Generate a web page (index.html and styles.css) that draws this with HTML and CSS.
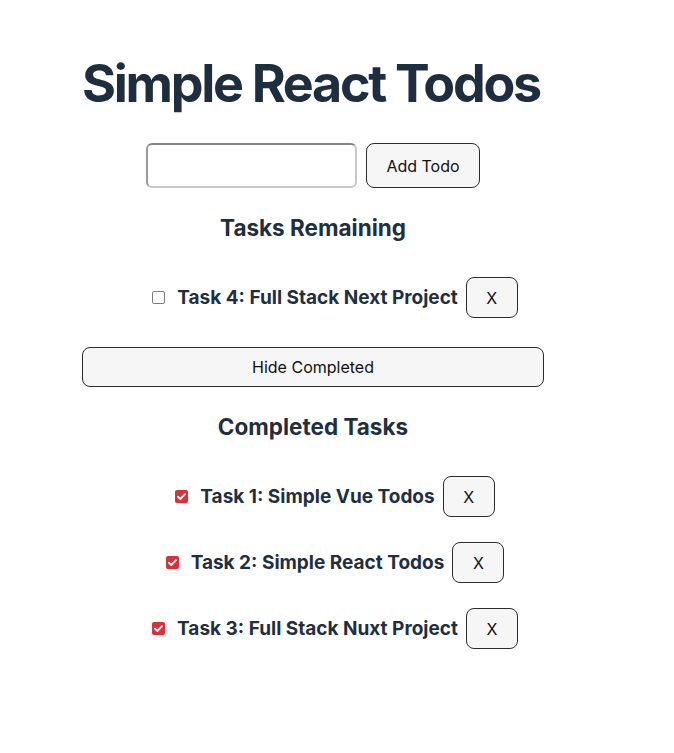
FILE: index.html
```html
<!DOCTYPE html>
<html>
<head>
<meta charset="utf-8">
<link rel="stylesheet" href="styles.css">
</head>
<body>
<div class="app">
  <h1 class="title">Simple React Todos</h1>
  <form class="add-form">
    <input class="add-input" type="text">
    <button class="btn add-btn" type="button">Add Todo</button>
  </form>
  <h2 class="section-title">Tasks Remaining</h2>
  <ul class="list list-remaining">
    <li class="item"><span class="box"></span><span class="label">Task 4: Full Stack Next Project</span><button class="btn del">X</button></li>
  </ul>
  <button class="btn hide-btn" type="button">Hide Completed</button>
  <h2 class="section-title completed-title">Completed Tasks</h2>
  <ul class="list">
    <li class="item"><span class="box checked"><svg viewBox="0 0 13 13" width="13" height="13"><path d="M3 6.7 L5.4 9 L10 4.2" fill="none" stroke="#fff" stroke-width="1.9" stroke-linecap="round" stroke-linejoin="round"/></svg></span><span class="label">Task 1: Simple Vue Todos</span><button class="btn del">X</button></li>
    <li class="item"><span class="box checked"><svg viewBox="0 0 13 13" width="13" height="13"><path d="M3 6.7 L5.4 9 L10 4.2" fill="none" stroke="#fff" stroke-width="1.9" stroke-linecap="round" stroke-linejoin="round"/></svg></span><span class="label">Task 2: Simple React Todos</span><button class="btn del">X</button></li>
    <li class="item"><span class="box checked"><svg viewBox="0 0 13 13" width="13" height="13"><path d="M3 6.7 L5.4 9 L10 4.2" fill="none" stroke="#fff" stroke-width="1.9" stroke-linecap="round" stroke-linejoin="round"/></svg></span><span class="label">Task 3: Full Stack Nuxt Project</span><button class="btn del">X</button></li>
  </ul>
</div>
</body>
</html>
```
FILE: styles.css
```css
* { box-sizing: border-box; }
html, body { margin: 0; padding: 0; background: #fff; }
body {
  font-family: Inter, "Noto Sans", sans-serif;
  color: #1f2f3f;
}
.app {
  width: 462px;
  margin-left: 82px;
  padding-top: 52px;
  display: flex;
  flex-direction: column;
  align-items: center;
}
.title {
  margin: 0;
  font-size: 52px;
  font-weight: 700;
  line-height: 64px;
  letter-spacing: -2.3px;
  white-space: nowrap;
  align-self: flex-start;
  color: #1e2e3e;
}
.add-form {
  margin-top: 27px;
  display: flex;
  gap: 9px;
}
.add-input {
  width: 211px;
  height: 45px;
  border: 2px solid #c9c9c9;
  border-top-color: #858585;
  border-left-color: #9a9a9a;
  border-radius: 6px;
  background: #fff;
  padding: 0 8px;
  font-size: 16px;
}
.btn {
  font-family: Inter, "Noto Sans", sans-serif;
  font-size: 16px;
  color: #111;
  background: #f6f6f6;
  border: 1px solid #2b2b2b;
  border-radius: 8px;
  cursor: pointer;
}
.add-btn {
  width: 114px;
  height: 45px;
}
.section-title {
  margin: 0;
  font-size: 22.5px;
  font-weight: 700;
  line-height: 28px;
  margin-top: 26px;
}
.list {
  list-style: none;
  margin: 0;
  padding: 0 0 0 44px;
  width: 100%;
  display: flex;
  flex-direction: column;
  align-items: center;
}
.list-remaining { margin-top: 35px; }
.item {
  display: flex;
  align-items: center;
  height: 41px;
  margin-bottom: 25px;
}
.list .item:last-child { margin-bottom: 0; }
.box {
  width: 13px;
  height: 13px;
  border: 1.5px solid #7c7c86;
  border-radius: 2px;
  margin-right: 12px;
  display: flex;
  flex: none;
}
.box.checked {
  border: none;
  background: #dd2f3a;
}
.label {
  font-size: 19px;
  font-weight: 700;
  margin-right: 8px;
  white-space: nowrap;
}
.del {
  width: 52px;
  height: 41px;
  font-size: 16px;
  flex: none;
}
.hide-btn {
  width: 462px;
  height: 40px;
  margin-top: 29px;
  font-size: 16px;
}
.completed-title { margin-top: 26px; }
.completed-title + .list { margin-top: 35px; }
```
